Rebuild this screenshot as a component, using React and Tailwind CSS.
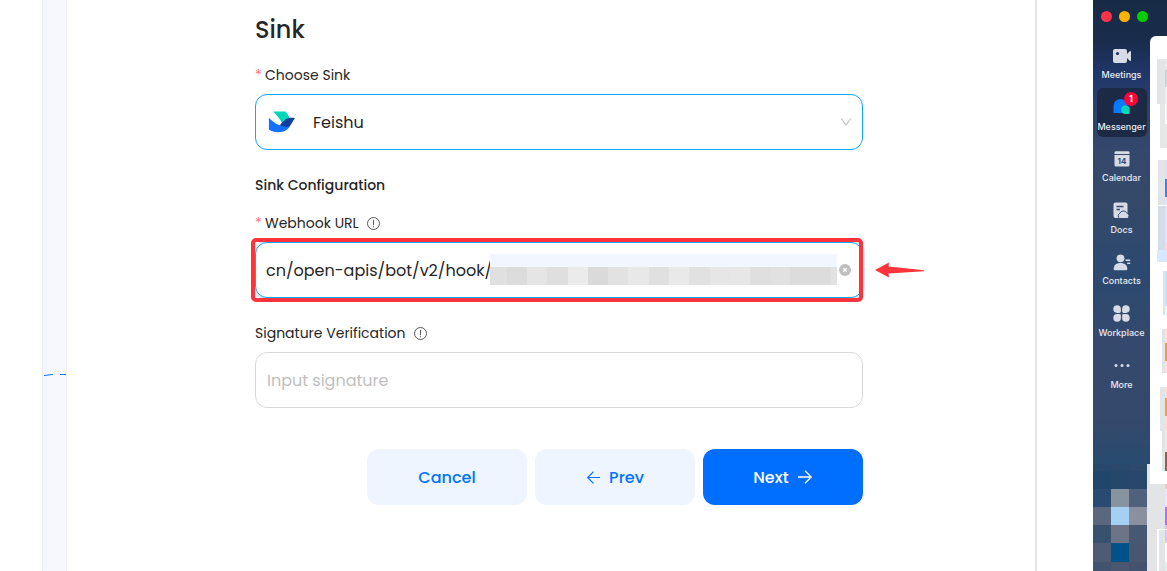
import React from "react";

const Info = () => (
  <svg className="h-[13px] w-[13px]" viewBox="0 0 13 13" fill="none" stroke="#333" strokeWidth="0.8">
    <circle cx="6.5" cy="6.5" r="6" />
    <path d="M6.5 2.800v5.400M6.5 9.200v1.100" />
  </svg>
);

const Star = () => <span className="w-[10px] text-[14px] leading-5 text-[#ff7875]">*</span>;

const Field = ({ className, children }) => (
  <div className={"flex h-14 w-full items-center rounded-xl border bg-white text-[16px] " + className}>{children}</div>
);

const FeishuLogo = () => (
  <svg className="h-[22px] w-[28px]" viewBox="0 0 28 22">
    <path d="M5 .5h12.500c2 2 3.200 4.300 3.700 6.500-2.400 1-4.700 2.900-7 5.500C12 8 9 4 5 .5z" fill="#00d6b9" />
    <path d="M.9 6.800c4.500 4.800 10 8.300 15.700 8.600 2.300 0 4.300-.4 6-1.600-2 4.800-6.200 7.500-12.200 7.500-3.800 0-7-.9-9.500-2.700z" fill="#1470ff" />
    <path d="M11.800 14.200c3.500-3.500 5.700-7.200 10.200-7.400 1.800-.2 3.500-.1 5 .4-2.300 2.200-3 6-5.400 7.700-2.700 1.700-6.500 1.100-9.800-.7z" fill="#0f3fa0" />
  </svg>
);

const icons = {
  Meetings: (
    <svg className="h-4 w-5" viewBox="0 0 20 16">
      <rect x="1" y="1" width="14" height="14" rx="2" fill="#d6dbe6" />
      <path d="M15 6l2.700-2.700q1.300-.8 1.300.7v8q0 1.500-1.300.7L15 10z" fill="#d6dbe6" />
      <circle cx="5.500" cy="5.500" r="1.600" fill="#1f3461" />
    </svg>
  ),
  Messenger: (
    <svg className="mb-[2.500px] h-[17px] w-5" viewBox="0 0 20 17">
      <path d="M1.500 15V8A7 7 0 0 1 15.500 8 7 7 0 0 1 8.500 15z" fill="#0a78ff" />
      <path d="M17.600 11.700V14.800Q17.600 15.900 16.500 15.900H13.300A4.200 4.200 0 1 1 17.600 11.700z" fill="#00d6b9" />
    </svg>
  ),
  Calendar: (
    <svg className="h-4 w-4" viewBox="0 0 16 16">
      <path d="M.5 3V1.500Q.5.3 2 .3h12q1.500 0 1.500 1.200V3zM.5 4h15v10q0 1.600-1.500 1.600H2Q.5 15.600.5 14z" fill="#d6dbe6" />
      <text x="8" y="12.800" textAnchor="middle" fontFamily="Inter, sans-serif" fontSize="8" fontWeight="700" fill="#34496f">14</text>
    </svg>
  ),
  Docs: (
    <svg className="h-[17px] w-[17px]" viewBox="0 0 17 17">
      <rect x=".5" y=".5" width="14" height="15.500" rx="2" fill="#d6dbe6" />
      <path d="M3.500 4.500h7M3.500 7.500h3.500" stroke="#34496f" strokeWidth="1.300" />
      <path d="M6.500 16.500a3.200 3.200 0 0 1 .3-5.300 4 4 0 0 1 7-.3 3 3 0 0 1 .5 5.600z" fill="#d6dbe6" stroke="#34496f" />
    </svg>
  ),
  Contacts: (
    <svg className="h-[17px] w-[18px]" viewBox="0 0 18 17">
      <circle cx="7.500" cy="4.300" r="3.900" fill="#d6dbe6" />
      <path d="M.7 15c0-4 2.600-6 6.800-6s6.800 2 6.800 6q0 1.300-1.300 1.300H2Q.7 16.300.7 15z" fill="#d6dbe6" />
      <path d="M12.500 6.300h4.700M14.200 9.300h3" stroke="#d6dbe6" strokeWidth="1.400" />
    </svg>
  ),
  Workplace: (
    <svg className="h-[17px] w-[17px]" viewBox="0 0 17 17" fill="#d6dbe6">
      <path d="M4.100.3A3.800 3.800 0 1 0 4.100 7.900H6.500q1.400 0 1.400-1.400V4.100A3.800 3.800 0 0 0 4.100.3zM12.900.3A3.800 3.800 0 1 1 12.900 7.900H10.500q-1.400 0-1.400-1.400V4.100A3.800 3.800 0 0 1 12.900.3zM4.100 16.700A3.800 3.800 0 1 1 4.100 9.100H6.500q1.400 0 1.400 1.400V12.900A3.800 3.800 0 0 1 4.100 16.700zM12.900 16.700A3.800 3.800 0 1 0 12.900 9.100H10.500q-1.400 0-1.400 1.400V12.900A3.800 3.800 0 0 0 12.900 16.700z" />
    </svg>
  ),
  More: (
    <svg className="h-4 w-4" viewBox="0 0 16 16" fill="#d6dbe6">
      <circle cx="2" cy="7.500" r="1.500" /><circle cx="8" cy="7.500" r="1.500" /><circle cx="14" cy="7.500" r="1.500" />
    </svg>
  ),
};

const urlBlocks = [
  ["w-[17px]", "bg-[#e0e0e0]"], ["w-5", "bg-[#dcdcdc]"], ["w-[20px]", "bg-[#e5e5e5]"], ["w-[21px]", "bg-[#dfdfdf]"],
  ["w-5", "bg-[#ebebeb]"], ["w-5", "bg-[#dadada]"], ["w-5", "bg-[#e2e2e2]"], ["w-[21px]", "bg-[#e8e8e8]"],
  ["w-5", "bg-[#e0e0e0]"], ["w-5", "bg-[#e9e9e9]"], ["w-[21px]", "bg-[#e1e1e1]"], ["w-5", "bg-[#e6e6e6]"],
  ["w-[20px]", "bg-[#e7e7e7]"], ["w-5", "bg-[#dfdfdf]"], ["w-5", "bg-[#e1e1e1]"], ["w-[41px]", "bg-[#dcdcdc]"],
  ["w-[6px]", "bg-[#e2e2e2]"],
];

const mosaic = [
  ["h-[7px]", "bg-[#27486c]", "bg-[#2a486c]", "bg-[#2d4a6d]"],
  ["h-[18px]", "bg-[#21466b]", "bg-[#24476a]", "bg-[#28486b]"],
  ["h-[18px]", "bg-[#294b72]", "bg-[#87939e]", "bg-[#50617b]"],
  ["h-[18px]", "bg-[#59677f]", "bg-[#a3d0f3]", "bg-[#8a909f]"],
  ["h-[18px]", "bg-[#38516f]", "bg-[#6d7485]", "bg-[#475873]"],
  ["h-[19px]", "bg-[#4d5b75]", "bg-[#005288]", "bg-[#46576f]"],
  ["h-[9px]", "bg-[#40536f]", "bg-[#4b5670]", "bg-[#43536f]"],
];

/* height, left inset, body colour, edge colour */
const slices = [
  ["h-[23px]", "w-[15px]", "bg-white", "bg-white"],
  ["h-[11px]", "w-[7px]", "bg-[#e2e4e6]", "bg-[#e8e8e8]"],
  ["h-[17px]", "w-[7px]", "bg-[#e2e4e6]", "bg-[#cfd1d3]"],
  ["h-[17px]", "w-[7px]", "bg-[#e2e4e6]", "bg-[#f1f1f1]"],
  ["h-[20px]", "w-[10px]", "bg-[#e5e7e8]", "bg-[#f8f8f8]"],
  ["h-[24px]", "w-[10px]", "bg-[#e5e7e8]", "bg-[#e8e8e8]"],
  ["h-[12px]", "w-[15px]", "bg-white", "bg-white"],
  ["h-[19px]", "w-[8px]", "bg-[#e2e4e6]", "bg-[#d7e0ff]"],
  ["h-[18px]", "w-[8px]", "bg-[#e2e4e6]", "bg-[#3f80f5]"],
  ["h-[8px]", "w-[8px]", "bg-[#dfe3e8]", "bg-[#d9e5ff]"],
  ["h-px", "w-[15px]", "bg-white", "bg-white"],
  ["h-[37px]", "w-[8px]", "bg-[#d4dce8]", "bg-[#e2e4fb]"],
  ["h-[7px]", "w-[8px]", "bg-[#d4dce8]", "bg-[#ffd2e4]"],
  ["h-[12px]", "w-[7px]", "bg-[#d7e8ff]", "bg-[#d7e8ff]"],
  ["h-[9px]", "w-[15px]", "bg-white", "bg-white"],
  ["h-[35px]", "w-[13px]", "bg-[#e2e4e6]", "bg-[#c7e2ff]"],
  ["h-[9px]", "w-[13px]", "bg-[#e2e4e6]", "bg-[#e7f8ff]"],
  ["h-[14px]", "w-[15px]", "bg-white", "bg-white"],
  ["h-[14px]", "w-[12px]", "bg-[#e2e4e6]", "bg-[#fde1dc]"],
  ["h-[18px]", "w-[12px]", "bg-[#e2e4e6]", "bg-[#eba044]"],
  ["h-[12px]", "w-[12px]", "bg-[#e2e4e6]", "bg-[#fde1e1]"],
  ["h-[14px]", "w-[15px]", "bg-white", "bg-white"],
  ["h-[11px]", "w-[10px]", "bg-[#e2e4e6]", "bg-[#ffdfd4]"],
  ["h-[18px]", "w-[10px]", "bg-[#e2e4e6]", "bg-[#ff9838]"],
  ["h-[15px]", "w-[10px]", "bg-[#e2e4e6]", "bg-[#ffdcd2]"],
  ["h-[21px]", "w-[12px]", "bg-[#e2e4e6]", "bg-[#ece9e8]"],
  ["h-[19px]", "w-[12px]", "bg-[#e2e4e6]", "bg-[#8b6552]"],
  ["h-[13px]", "w-[15px]", "bg-white", "bg-white"],
  ["h-[5px]", "w-[7px]", "bg-[#e2e4e6]", "bg-[#e0d0cc]"],
  ["h-[18px]", "w-[7px]", "bg-[#e2e4e6]", "bg-[#ece5ff]"],
  ["h-[18px]", "w-[7px]", "bg-[#e2e4e6]", "bg-[#ac72ff]"],
  ["h-[4px]", "w-[7px]", "bg-[#e2e4e6]", "bg-[#d6c0ff]"],
  ["h-px", "w-[7px]", "bg-white", "bg-white"],
  ["h-[13px]", "w-[9px]", "bg-[#e2e4e6]", "bg-[#d9c3fb]"],
  ["h-[19px]", "w-[9px]", "bg-[#e2e4e6]", "bg-[#f7faf9]"],
  ["h-[9px]", "w-[9px]", "bg-[#e2e4e6]", "bg-[#def1ec]"],
];

const insetFill = (i) => {
  if (i < 28) return "";
  return i > 32 ? " border-r-2 border-white bg-[#e2e4e6]" : " bg-[#e2e4e6]";
};

function Messenger() {
  return (
    <div className="flex h-full w-[74px] shrink-0 overflow-hidden bg-[linear-gradient(180deg,#172a45_0,#192c4b_40px,#20376b_75px,#2e4268_115px,#34486d_150px,#354969_200px,#2c4970_270px,#34496d_340px,#34496b_420px,#284b70_464px,#34496b_571px)] font-['Inter',sans-serif]">
      <div className="flex w-[57px] flex-col">
        <div className="flex h-9 items-center gap-[7px] pb-1 pl-[7.500px]">
          <i className="h-[11px] w-[11px] rounded-full bg-[#ff3347]" />
          <i className="h-[11px] w-[11px] rounded-full bg-[#ffb300]" />
          <i className="h-[11px] w-[11px] rounded-full bg-[#00ce00]" />
        </div>
        <nav className="flex h-[362px] flex-col pl-[3.500px]">
          {Object.entries(icons).map(([name, icon]) => (
            <div key={name} className="h-[51.6px] w-[50px] shrink-0">
              <div className={"relative flex h-[49px] flex-col items-center rounded-md pt-[11px] " + (name === "Messenger" ? "bg-[#1d2a46]" : "")}>
                <div className="flex h-[18px] items-center">{icon}</div>
                <span className="mt-[4px] whitespace-nowrap text-[9px] font-medium leading-[12px] text-[#e7eaf2]">{name}</span>
                {name === "Messenger" && (
                  <b className="absolute left-[27.500px] top-[4px] flex h-[14px] w-[14px] items-center justify-center rounded-full bg-[#fa0537] text-[9px] text-white">1</b>
                )}
              </div>
            </div>
          ))}
        </nav>
        <div className="mt-auto flex flex-col">
          {mosaic.map(([h, ...cells], i) => (
            <div key={i} className={"flex " + h}>
              {cells.map((c, j) => <i key={j} className={"w-[18px] " + c} />)}
              <i className="w-[3px] bg-[#e2e4e6]" />
            </div>
          ))}
        </div>
      </div>
      <div className="mt-9 flex w-[17px] flex-col overflow-hidden rounded-tl-md bg-white">
        {slices.map(([h, inset, body, edge], i) => (
          <div key={i} className={"flex shrink-0 " + h}>
            <i className={"shrink-0 " + inset + insetFill(i)} />
            <i className={"flex-1 " + body} />
            <i className={"w-[2px] shrink-0 " + edge} />
          </div>
        ))}
      </div>
    </div>
  );
}

export default function App() {
  return (
    <div className="flex h-[571px] w-[1167px] overflow-hidden bg-white font-['Poppins','Inter',sans-serif] text-[#262626]">
      <div className="ml-[42px] flex w-[25px] shrink-0 items-start border-x border-[#f0f0f0] bg-[linear-gradient(90deg,#f3f6fb,#f6f8fd_30%)]">
        <svg className="mt-[373px] h-1 w-[23px]" viewBox="0 0 23 4">
          <path d="M1 2.500L10 1.500M17 1.500h6" stroke="#0a78ff" />
        </svg>
      </div>
      <main className="w-[970px] shrink-0 border-r-2 border-[#e4e4e4] pl-[188px]">
        <form className="flex w-[608px] flex-col pt-[14px]">
          <h1 className="h-8 text-[24px] font-medium leading-8">Sink</h1>
          <div className="mt-[19px] flex h-5 items-center text-[14px]"><Star /><span>Choose Sink</span></div>
          <Field className="mt-[9px] border-[#0fa5fa] pl-3 pr-[10px]">
            <FeishuLogo />
            <span className="ml-[17px] flex-1 pt-[2px]">Feishu</span>
            <svg className="h-3 w-3" viewBox="0 0 12 12" fill="none" stroke="#bfbfbf" strokeWidth="1.100"><path d="M1.300 2.500L6 9l4.700-6.500" /></svg>
          </Field>
          <h2 className="mt-[25px] h-5 text-[14px] font-medium leading-5">Sink Configuration</h2>
          <div className="mt-[18px] flex h-5 items-center text-[14px]"><Star /><span className="mr-2">Webhook URL</span><span className="pt-px"><Info /></span></div>
          <div className="relative mt-[9px]">
            <Field className="border-[#0fa5fa] pl-[10px] shadow-[0_0_0_2px_#dcecfb]">
              <span className="w-[224px] whitespace-nowrap pt-[2px]">cn/open-apis/bot/v2/hook/</span>
              <div className="mb-[2px] flex h-[31px] w-[347px] flex-col overflow-hidden">
                <div className="h-[13px] bg-[#f2f7ff]" />
                <div className="flex h-[18px]">{urlBlocks.map(([w, c], i) => <i key={i} className={"shrink-0 " + w + " " + c} />)}</div>
              </div>
              <svg className="ml-[2px] h-3 w-3" viewBox="0 0 12 12"><circle cx="6" cy="6" r="6" fill="#bfbfbf" /><path d="M4.200 4.200l3.600 3.600M7.800 4.200L4.200 7.800" stroke="#fff" strokeWidth="1.300" /></svg>
            </Field>
            <div className="absolute -left-1 -top-1 h-16 w-[612px] rounded-[5px] border-4 border-[#ff333b]" />
            <svg className="absolute left-[619px] top-5 h-4 w-[51px]" viewBox="0 0 51 16" fill="#ff333b"><path d="M1 8L15 .5 14.500 4.500 50 8.300v1L14.500 11.500 15 15.500z" /></svg>
          </div>
          <div className="mt-[25px] flex h-5 items-center text-[14px]"><span className="mr-2">Signature Verification</span><span className="pt-px"><Info /></span></div>
          <Field className="mt-[9px] border-[#d9d9d9] pl-[11px] pt-[2px] text-[#bfbfbf]">Input signature</Field>
          <div className="mt-[41px] flex justify-end gap-2 text-[16px] font-medium">
            <div className="flex h-14 w-40 items-center justify-center rounded-xl bg-[#eff5ff] text-[#0074ff]"><span className="pt-[2px]">Cancel</span></div>
            <div className="flex h-14 w-40 items-center justify-center gap-2 rounded-xl bg-[#eff5ff] text-[#0074ff]">
              <svg className="h-[15px] w-[15px]" viewBox="0 0 16 16" fill="none" stroke="currentColor" strokeWidth="1.300"><path d="M15 8H2M8 1.800L1.800 8 8 14.200" /></svg>
              <span className="pt-[2px]">Prev</span>
            </div>
            <div className="flex h-14 w-40 items-center justify-center gap-2 rounded-xl bg-[#006eff] text-white">
              <span className="pt-[2px]">Next</span>
              <svg className="h-4 w-4" viewBox="0 0 16 16" fill="none" stroke="currentColor" strokeWidth="1.300"><path d="M1 8h13M8 1.800L14.200 8 8 14.200" /></svg>
            </div>
          </div>
        </form>
      </main>
      <div className="w-14 shrink-0" />
      <Messenger />
    </div>
  );
}
